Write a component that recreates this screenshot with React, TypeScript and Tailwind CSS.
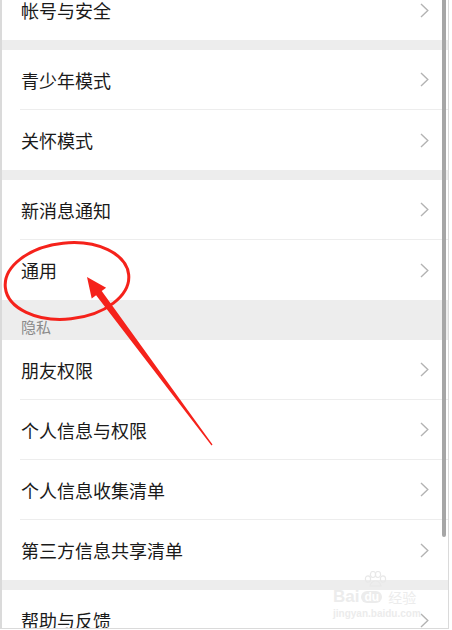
import React from "react";

const Chevron = () => (
  <svg width="9" height="15" viewBox="0 0 9 15" fill="none">
    <path d="M1 1 L7.8 7.5 L1 14" stroke="#b3b3b3" strokeWidth="1.4" />
  </svg>
);

const Group = ({ items }: { items: string[] }) => (
  <div className="bg-white pl-[18px]">
    {items.map((label, i) => (
      <div
        key={label}
        className={
          i < items.length - 1
            ? "h-[60px] flex items-center justify-between pl-[1px] pr-[19px] border-b border-[#ededed]"
            : "h-[60px] flex items-center justify-between pl-[1px] pr-[19px]"
        }
      >
        <span className="text-[18px] leading-none text-[#1a1a1a]">{label}</span>
        <Chevron />
      </div>
    ))}
  </div>
);

const Gap = () => <div className="h-[10px] bg-[#ededed]" />;

export default function App() {
  return (
    <div className="relative w-[452px] h-[630px] bg-white overflow-hidden font-['Noto_Sans_CJK_SC','Noto_Sans',sans-serif]">
      <div className="relative w-[449px] h-[629px] border-l-2 border-r border-b border-[#dadada] overflow-hidden">
        <div className="-mt-[20px]">
          <Group items={["帐号与安全"]} />
          <Gap />
          <Group items={["青少年模式", "关怀模式"]} />
          <Gap />
          <Group items={["新消息通知", "通用"]} />
          <div className="h-[40px] bg-[#ededed] pl-[19px] flex items-end pb-[6px]">
            <span className="text-[15px] leading-none text-[#8a8a8a]">隐私</span>
          </div>
          <Group items={["朋友权限", "个人信息与权限", "个人信息收集清单", "第三方信息共享清单"]} />
          <Gap />
          <Group items={["帮助与反馈"]} />
        </div>

        {/* scrollbar */}
        <div className="absolute left-[440px] top-0 w-[4px] h-[537px] rounded-b-full bg-[#a6a6a6]" />
      </div>

      {/* red annotation */}
      <svg className="absolute left-0 top-0 pointer-events-none" width="452" height="630">
        <ellipse
          cx="67"
          cy="281"
          rx="62"
          ry="38"
          fill="none"
          stroke="#f5221b"
          strokeWidth="3"
          transform="rotate(-6 67 281)"
        />
        <polygon
          fill="#f5221b"
          points="87,277 106.1,287.7 101.7,291 212.5,444.6 211.5,445.4 96.1,295.2 91.7,298.5"
        />
      </svg>

      {/* watermark */}
      <div className="absolute left-[333px] top-[571px] pointer-events-none text-[#ececec]">
        <svg className="ml-[30px]" width="24" height="17" viewBox="0 0 24 17" fill="none" stroke="#e8e8e8" strokeWidth="1.2">
          <ellipse cx="5" cy="8" rx="2.6" ry="3.2" />
          <ellipse cx="10" cy="3.5" rx="2.6" ry="3" />
          <ellipse cx="15" cy="3.5" rx="2.6" ry="3" />
          <ellipse cx="20" cy="8" rx="2.6" ry="3.2" />
          <path d="M7 15 C8 11 10 10 12.5 10 C15 10 17 11 18 15 Z" />
        </svg>
        <div className="flex items-center gap-[2px] leading-none">
          <span className="font-['Liberation_Sans',sans-serif] font-bold text-[17px]">Bai</span>
          <span className="rounded-full bg-[#ececec] text-white px-[3px] text-[12px] font-['Liberation_Sans',sans-serif] font-bold">du</span>
          <span className="text-[14px] ml-[4px]">经验</span>
        </div>
        <div className="mt-[4px] text-[10px] leading-none font-['Liberation_Sans',sans-serif] font-bold">
          jingyan.baidu.com
        </div>
      </div>
    </div>
  );
}
